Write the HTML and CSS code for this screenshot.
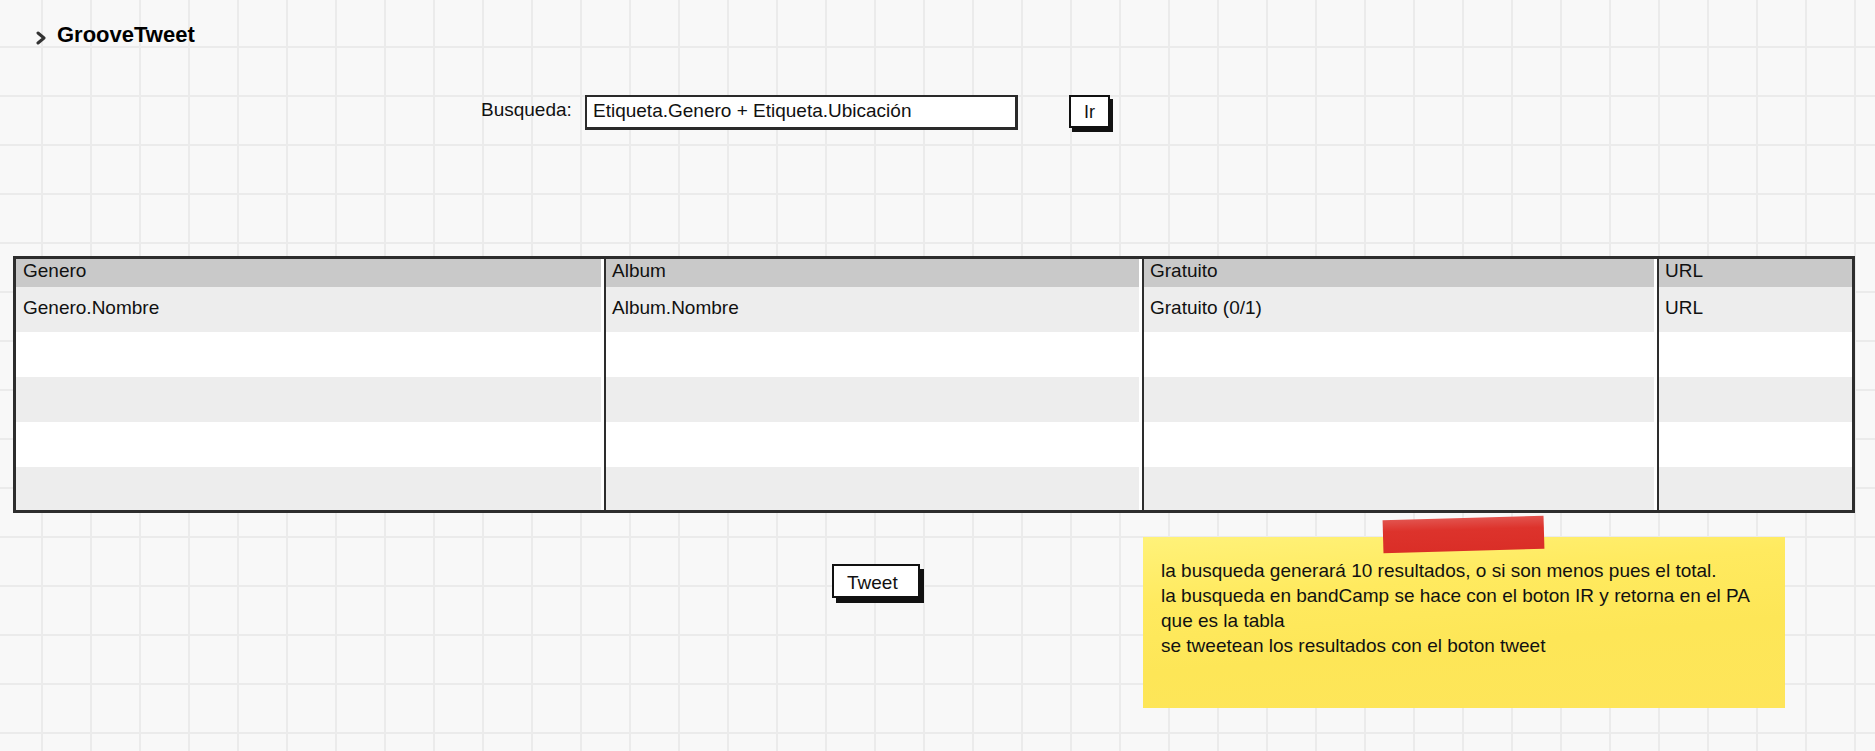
FILE: index.html
```html
<!DOCTYPE html>
<html lang="es">
<head>
<meta charset="utf-8">
<title>GrooveTweet</title>
<link rel="stylesheet" href="styles.css">
</head>
<body>
<div class="page">
  <header class="app-header">
    <svg class="chevron" width="10" height="14" viewBox="0 0 10 14"><path d="M2 2 L8 7 L2 12" fill="none" stroke="#333" stroke-width="3" stroke-linejoin="round" stroke-linecap="round"/></svg>
    <h1 class="title">GrooveTweet</h1>
  </header>

  <section class="search-row">
    <label class="search-label">Busqueda:</label>
    <div class="search-input">Etiqueta.Genero + Etiqueta.Ubicación</div>
    <button class="btn btn-ir">Ir</button>
  </section>

  <section class="data-table">
    <div class="cell head c1">Genero</div>
    <div class="cell head c2">Album</div>
    <div class="cell head c3">Gratuito</div>
    <div class="cell head c4">URL</div>

    <div class="cell odd c1">Genero.Nombre</div>
    <div class="cell odd c2">Album.Nombre</div>
    <div class="cell odd c3">Gratuito (0/1)</div>
    <div class="cell odd c4">URL</div>

    <div class="cell even c1"></div>
    <div class="cell even c2"></div>
    <div class="cell even c3"></div>
    <div class="cell even c4"></div>

    <div class="cell odd c1"></div>
    <div class="cell odd c2"></div>
    <div class="cell odd c3"></div>
    <div class="cell odd c4"></div>

    <div class="cell even c1"></div>
    <div class="cell even c2"></div>
    <div class="cell even c3"></div>
    <div class="cell even c4"></div>

    <div class="cell odd c1"></div>
    <div class="cell odd c2"></div>
    <div class="cell odd c3"></div>
    <div class="cell odd c4"></div>
  </section>

  <section class="footer-row">
    <button class="btn btn-tweet">Tweet</button>
    <div class="sticky-note">
      <div class="tape"></div>
      <p class="note-text">la busqueda generará 10 resultados, o si son menos pues el total.<br>la busqueda en bandCamp se hace con el boton IR y retorna en el PA<br>que es la tabla<br>se tweetean los resultados con el boton tweet</p>
    </div>
  </section>
</div>
</body>
</html>
```

FILE: styles.css
```css
html, body {
  margin: 0;
  padding: 0;
}

body {
  width: 1875px;
  min-height: 751px;
  background-color: #f8f8f8;
  background-image:
    linear-gradient(to right, #ebebeb 2px, transparent 2px),
    linear-gradient(to bottom, #ebebeb 2px, transparent 2px);
  background-size: 49px 49px;
  background-position: 41px 46px;
  font-family: "Liberation Sans", Arial, sans-serif;
  font-size: 19px;
  color: #111;
  overflow: hidden;
}

.page {
  display: flex;
  flex-direction: column;
}

/* header */
.app-header {
  display: flex;
  align-items: center;
  gap: 11px;
  padding: 22px 0 0 36px;
  height: 26px;
}

.chevron {
  margin-top: 6px;
}

.title {
  margin: 0;
  font-size: 22px;
  font-weight: bold;
  line-height: 26px;
  color: #000;
}

/* search */
.search-row {
  display: flex;
  align-items: flex-start;
  margin-top: 47px;
  padding-left: 481px;
}

.search-label {
  width: 104px;
  margin-top: 4px;
  line-height: 22px;
}

.search-input {
  box-sizing: border-box;
  width: 433px;
  height: 35px;
  padding: 3px 0 0 6px;
  line-height: 22px;
  background: #fff;
  border: 2px solid #2a2a2a;
  border-right-width: 3px;
  border-bottom-width: 3px;
}

.btn {
  font-family: "Liberation Sans", Arial, sans-serif;
  color: #111;
  background: #fff;
  border: 2px solid #111;
  margin: 0;
  cursor: pointer;
}

.btn-ir {
  box-sizing: border-box;
  width: 41px;
  height: 33px;
  margin-left: 51px;
  padding: 0;
  font-size: 18px;
  line-height: 22px;
  box-shadow: 3px 4px 0 #111;
}

/* table */
.data-table {
  box-sizing: border-box;
  width: 1842px;
  margin: 126px 0 0 13px;
  display: grid;
  grid-template-columns: 588px 538px 515px 1fr;
  grid-template-rows: 28px 45px 45px 45px 45px 43px;
  border: 3px solid #2d2d2d;
  background: #fff;
}

.cell {
  box-sizing: border-box;
  padding: 10px 0 0 7px;
  line-height: 22px;
  white-space: nowrap;
}

.cell.c1, .cell.c2, .cell.c3 {
  border-right: 3px solid #fff;
}

.cell.c2, .cell.c3, .cell.c4 {
  border-left: 2px solid #2d2d2d;
  padding-left: 6px;
}

.cell.head {
  background: #c9c9c9;
  padding-top: 2px;
  line-height: 20px;
}

.cell.odd {
  background: #ededed;
}

.cell.even {
  background: #fff;
}

/* footer */
.footer-row {
  display: flex;
  align-items: flex-start;
  padding-left: 832px;
}

.btn-tweet {
  box-sizing: border-box;
  width: 88px;
  height: 34px;
  margin-top: 51px;
  padding: 3px 0 0 13px;
  text-align: left;
  font-size: 19px;
  line-height: 22px;
  box-shadow: 4px 5px 0 #111;
}

.sticky-note {
  position: relative;
  box-sizing: border-box;
  width: 642px;
  height: 171px;
  margin: 24px 0 0 223px;
  padding: 21px 0 0 18px;
  background: linear-gradient(175deg, #fff27a 0%, #ffea5f 30%, #fde657 60%, #fee55a 100%);
}

.tape {
  position: absolute;
  left: 240px;
  top: -19px;
  width: 161px;
  height: 33px;
  background: linear-gradient(to bottom, #e2534e 0%, #dd332c 35%, #da2e27 100%);
  transform: rotate(-1.6deg);
}

.note-text {
  margin: 0;
  font-size: 19px;
  line-height: 25px;
  color: #111;
  white-space: nowrap;
}
```
